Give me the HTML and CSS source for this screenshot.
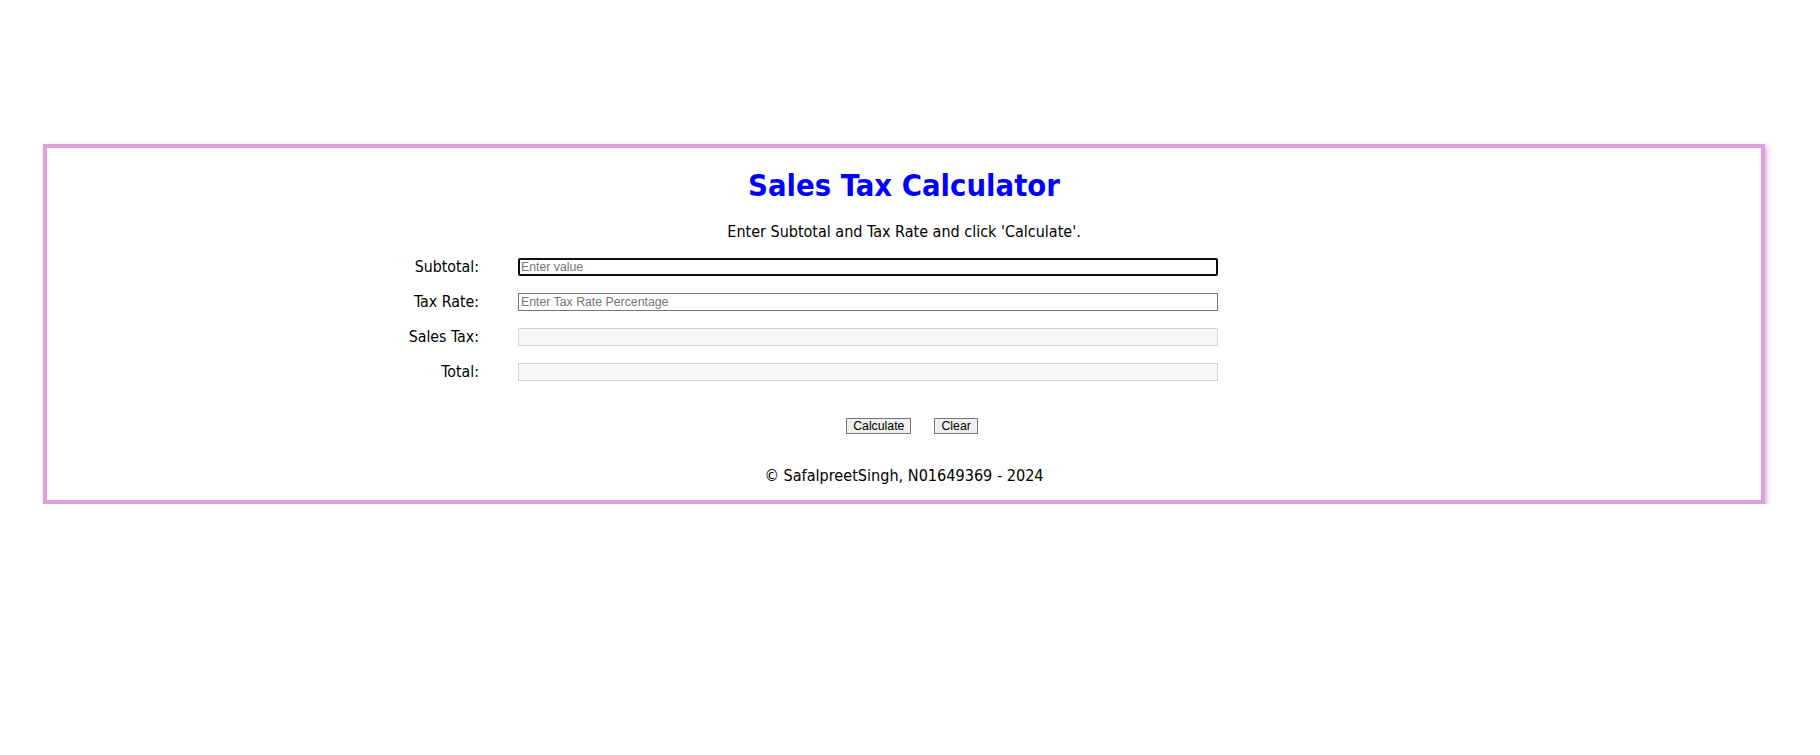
FILE: index.html
```html
<!DOCTYPE html>
<html lang="en">
<head>
<meta charset="utf-8">
<title>Sales Tax Calculator</title>
<link rel="stylesheet" href="styles.css">
</head>
<body>
<main class="card">
  <h1 class="title">Sales Tax Calculator</h1>
  <p class="intro">Enter Subtotal and Tax Rate and click 'Calculate'.</p>
  <div class="form">
    <label class="label" for="subtotal">Subtotal:</label>
    <input class="field field-focus" id="subtotal" type="text" placeholder="Enter value">
    <label class="label" for="rate">Tax Rate:</label>
    <input class="field" id="rate" type="text" placeholder="Enter Tax Rate Percentage">
    <label class="label" for="tax">Sales Tax:</label>
    <input class="field field-readonly" id="tax" type="text" readonly>
    <label class="label" for="total">Total:</label>
    <input class="field field-readonly" id="total" type="text" readonly>
  </div>
  <div class="actions">
    <button class="btn" type="button">Calculate</button>
    <button class="btn" type="button">Clear</button>
  </div>
  <p class="footer">&copy; SafalpreetSingh, N01649369 - 2024</p>
</main>
</body>
</html>
```
FILE: styles.css
```css
html, body {
  margin: 0;
  padding: 0;
  background: #ffffff;
}

body {
  padding-top: 144px;
  font-family: "DejaVu Sans Condensed", "DejaVu Sans", sans-serif;
  color: #000;
}

.card {
  box-sizing: border-box;
  width: 1722px;
  margin-left: 43px;
  border: 4px solid #dda0dd;
  box-shadow: 2px 2px 5px rgba(221, 160, 221, 0.9);
  padding: 20px 0 15px;
  display: flex;
  flex-direction: column;
  align-items: center;
}

.title {
  margin: 0;
  font-size: 30.7px;
  line-height: 36px;
  font-weight: bold;
  color: #0000ff;
}

.intro {
  margin: 18px 0 0;
  font-size: 16px;
  line-height: 20px;
}

.form {
  align-self: flex-start;
  margin: 16px 0 0 232px;
  display: grid;
  grid-template-columns: 200px 700px;
  column-gap: 39px;
  row-gap: 17px;
  align-items: center;
}

.label {
  text-align: right;
  font-size: 15.8px;
  line-height: 18px;
}

.field {
  box-sizing: border-box;
  width: 700px;
  height: 18px;
  margin: 0;
  padding: 0 2px;
  border: 1px solid #767676;
  border-radius: 0;
  background: #fff;
  font-family: "Liberation Sans", Arial, sans-serif;
  font-size: 12.3px;
  line-height: 14px;
  color: #000;
  outline: none;
}

.field::placeholder {
  color: #757575;
  opacity: 1;
}

.field-focus {
  border: 2px solid #101010;
  border-radius: 2px;
  padding: 0 1px;
}

.field-readonly {
  background: #f7f7f7;
  border-color: #d2d2d2;
}

.actions {
  margin-top: 37px;
  padding-left: 16px;
  display: flex;
  gap: 23px;
}

.btn {
  box-sizing: border-box;
  height: 16px;
  margin: 0;
  padding: 0 6px;
  border: 1px solid #767676;
  border-radius: 0;
  background: #efefef;
  font-family: "Liberation Sans", Arial, sans-serif;
  font-size: 12.3px;
  line-height: 14px;
  color: #000;
}

.footer {
  margin: 33px 0 0;
  font-size: 16.1px;
  line-height: 18px;
}
```
